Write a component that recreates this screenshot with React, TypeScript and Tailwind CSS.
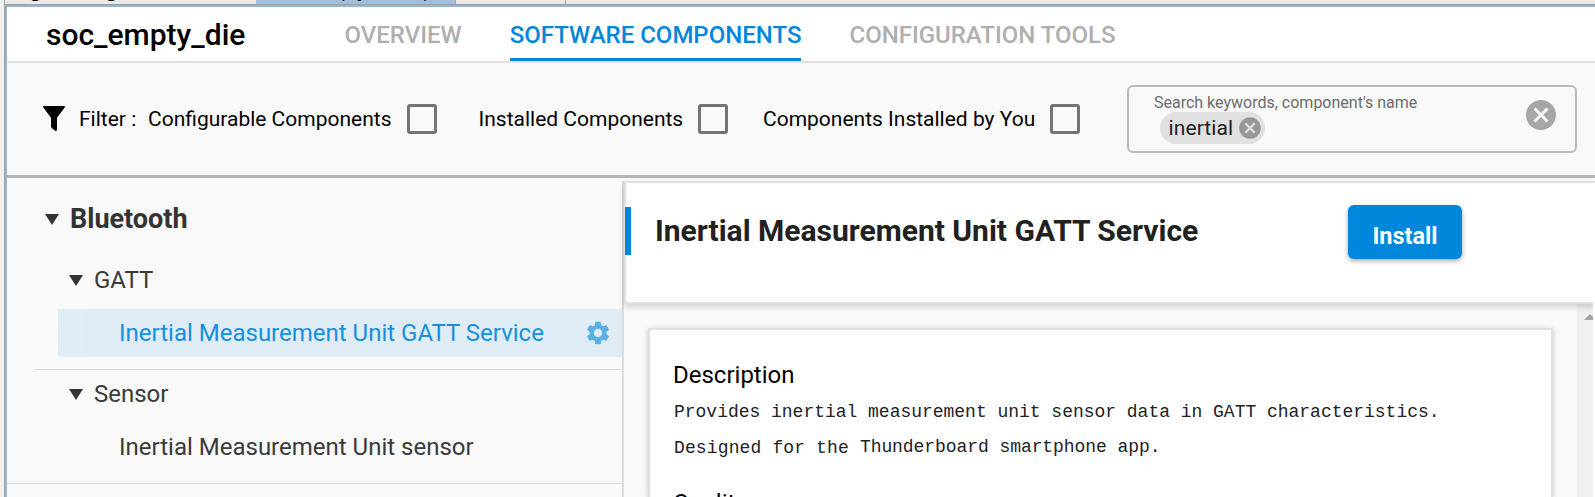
import type { ReactNode } from "react";
import { MdCancel, MdSettings } from "react-icons/md";

function EditorTabs() {
  return (
    <div className="flex h-1 shrink-0 overflow-hidden bg-[#f0f0f0] font-['Open_Sans',sans-serif] text-[17px] text-black">
      <div className="ml-1 w-[252px] border-l border-[#a0a0a0] bg-[#ebebeb] pl-[26px]">
        <span className="-mt-[21px] block leading-6 tracking-[-0.1px]">gatt_configuration.btconf</span>
      </div>
      <div className="w-[199px] bg-[#a3bddb] pl-[26px]">
        <span className="-mt-[21px] block leading-6">soc_empty_die.slcp</span>
      </div>
      <div className="w-[111px] border-x border-[#a0a0a0] bg-[#ebebeb]" />
      <div className="flex-1 bg-[#ebebeb]" />
    </div>
  );
}

function Tab({ children, active = false }: { children: ReactNode; active?: boolean }) {
  return (
    <button
      className={
        active
          ? "h-[54px] border-b-[3px] border-[#0087dc] pt-[5px] text-2xl/6 font-medium text-[#0087dc]"
          : "h-[54px] border-b-[3px] border-transparent pt-[5px] text-2xl/6 font-medium text-[#afafaf]"
      }
    >
      {children}
    </button>
  );
}

function Check({ label, className }: { label: string; className: string }) {
  return (
    <label className={`flex shrink-0 items-center justify-between ${className}`}>
      <span className="whitespace-nowrap pt-0.5">{label}</span>
      <span className="size-[30px] shrink-0 rounded-[3px] border-[3px] border-[#747474]" />
    </label>
  );
}

function Caret() {
  return (
    <svg className="shrink-0" width="14" height="11" viewBox="0 0 14 11" fill="#333">
      <path d="M0 0h14L7 11z" />
    </svg>
  );
}

function FilterIcon() {
  return (
    <svg className="mb-[2px] shrink-0" width="22" height="25" viewBox="0 0 22 25">
      <path d="M.7 0h20.600c.7 0 .9.900.4 1.500L14 11.800V23.700c0 1.200-1.400 1.700-2.300.9L8.700 21.900c-.400-.4-.7-.8-.7-1.400v-8.700L.3 1.500C-.2.900 0 0 .7 0z" />
    </svg>
  );
}

function FilterBar() {
  return (
    <div className="flex h-[115px] shrink-0 items-center border-b-[3px] border-[#b5b5b5] bg-[#f9f9f9] pl-[35.5px] text-[21px] text-black">
      <FilterIcon />
      <span className="ml-[14.5px] w-[69px] whitespace-nowrap pt-0.5">Filter :</span>
      <Check label="Configurable Components" className="w-[289px]" />
      <Check label="Installed Components" className="ml-[41.5px] w-[249.5px]" />
      <Check label="Components Installed by You" className="ml-[35px] w-[317px]" />
      <div className="ml-[47px] flex h-[68px] w-[450px] shrink-0 justify-between rounded-[6px] border-2 border-[#bbb] pl-[25px] pr-4">
        <div>
          <div className="mt-[5px] h-5 whitespace-nowrap pt-px text-base/5 text-[#6b6b6b]">Search keywords, component's name</div>
          <div className="ml-[6px] flex h-8 w-[105px] items-center justify-between rounded-full bg-[#e0e0e0] pl-[8.5px] pr-[2px] text-[21px] tracking-[0.1px] text-[#212121]">
            <span className="pt-px">inertial</span>
            <MdCancel className="size-[26px] shrink-0 text-[#979797]" />
          </div>
        </div>
        <MdCancel className="mt-[10px] size-9 text-[#a6a6a6]" />
      </div>
    </div>
  );
}

function GroupHeader({ children }: { children: ReactNode }) {
  return (
    <div className="mb-[5px] flex h-12 items-center gap-[11px] pl-[62px]">
      <Caret />
      {children}
    </div>
  );
}

function Sidebar() {
  return (
    <nav className="h-full w-[615px] shrink-0 overflow-hidden text-2xl text-[#3a3a3a]">
      <div className="mt-[17px] flex h-[61px] items-center gap-[11px] pb-[13px] pl-[38px] text-[27px] font-bold text-[#333]">
        <Caret />
        <span className="pt-0.5">Bluetooth</span>
      </div>
      <GroupHeader>GATT</GroupHeader>
      <div className="ml-[51px] flex h-12 items-center justify-between border-l-[28px] border-[#dfeef6] bg-[#e0ecf5] pl-[33px] pr-[10px] text-[#1490df]">
        Inertial Measurement Unit GATT Service
        <MdSettings className="size-7 text-[#5aafe6]" />
      </div>
      <div className="ml-[27px] mt-3 h-px bg-[#dcdcdc]" />
      <GroupHeader>Sensor</GroupHeader>
      <div className="flex h-12 items-center pl-28">Inertial Measurement Unit sensor</div>
      <div className="mt-3 h-px bg-[#dcdcdc]" />
    </nav>
  );
}

function Details() {
  return (
    <main className="mt-[3px] flex min-w-0 flex-1 flex-col border-l-2 border-[#dcdcdc]">
      <header className="relative z-10 flex h-[123px] shrink-0 items-start border-2 border-r-0 border-[#e0e0e0] bg-white shadow-[0_3px_6px_rgba(0,0,0,0.16)]">
        <div className="-ml-px mt-6 h-12 w-[6px] shrink-0 bg-[#0087dc]" />
        <h1 className="ml-6 mt-6 w-[693px] whitespace-nowrap text-[30px]/[48px] font-bold text-[#212121]">
          Inertial Measurement Unit GATT Service
        </h1>
        <button className="mt-[22px] h-[54px] w-[114px] rounded-[6px] bg-[#0087dc] pt-[7px] text-[23.5px]/6 font-bold text-white shadow-[0_2px_5px_rgba(0,0,0,0.35)]">
          Install
        </button>
      </header>
      <div className="flex min-h-0 flex-1">
        <section className="ml-6 mt-6 w-[905px] shrink-0 border-2 border-b-0 border-[#e0e0e0] bg-white pl-6 pt-[29px] text-black shadow-[0_1px_5px_rgba(0,0,0,0.2)]">
          <h2 className="-ml-px h-8 text-2xl/8">Description</h2>
          <p className="mt-[3px] h-9 whitespace-nowrap font-['Liberation_Mono',monospace] text-[18px]/9 tracking-[-0.02px] text-[#222]">
            Provides inertial measurement unit sensor data in GATT characteristics.
          </p>
          <p className="flex h-9 gap-[11px] whitespace-nowrap font-['Liberation_Mono',monospace] text-[18px]/9 text-[#222]">
            <span className="tracking-[0.13px]">Designed for the</span>
            <span className="-mt-px tracking-[-0.07px]">Thunderboard smartphone app.</span>
          </p>
          <h2 className="-ml-px mt-[21px] h-8 text-2xl/8">Quality</h2>
        </section>
        <div className="ml-6 w-4 shrink-0 overflow-hidden bg-[#f0f0f0] pl-[7px] pt-[10px]">
          <svg width="12" height="6" viewBox="0 0 12 6" fill="#a3a3a3">
            <path d="M0 6 6 0l6 6z" />
          </svg>
        </div>
        <div className="relative z-20 -mt-0.5 w-0.5 shrink-0 bg-white" />
      </div>
    </main>
  );
}

export default function App() {
  return (
    <div className="flex h-[497px] w-[1595px] flex-col overflow-hidden bg-[#f0f0f0] font-['Roboto',sans-serif]">
      <EditorTabs />
      <div className="ml-1 flex min-h-0 flex-1 flex-col border-l border-t border-[#a0a0a0]">
        <div className="flex min-h-0 flex-1 flex-col border-l-2 border-t-2 border-[#99b4d1] bg-[#f9f9f9]">
          <header className="flex h-14 shrink-0 border-b-2 border-[#e0e0e0] bg-white pl-[39px]">
            <div className="w-[298.5px] pt-px text-[30px]/[54px] font-medium text-black">soc_empty_die</div>
            <nav className="flex gap-12">
              <Tab>OVERVIEW</Tab>
              <Tab active>SOFTWARE COMPONENTS</Tab>
              <Tab>CONFIGURATION TOOLS</Tab>
            </nav>
          </header>
          <FilterBar />
          <div className="flex min-h-0 flex-1">
            <Sidebar />
            <Details />
          </div>
        </div>
      </div>
    </div>
  );
}
